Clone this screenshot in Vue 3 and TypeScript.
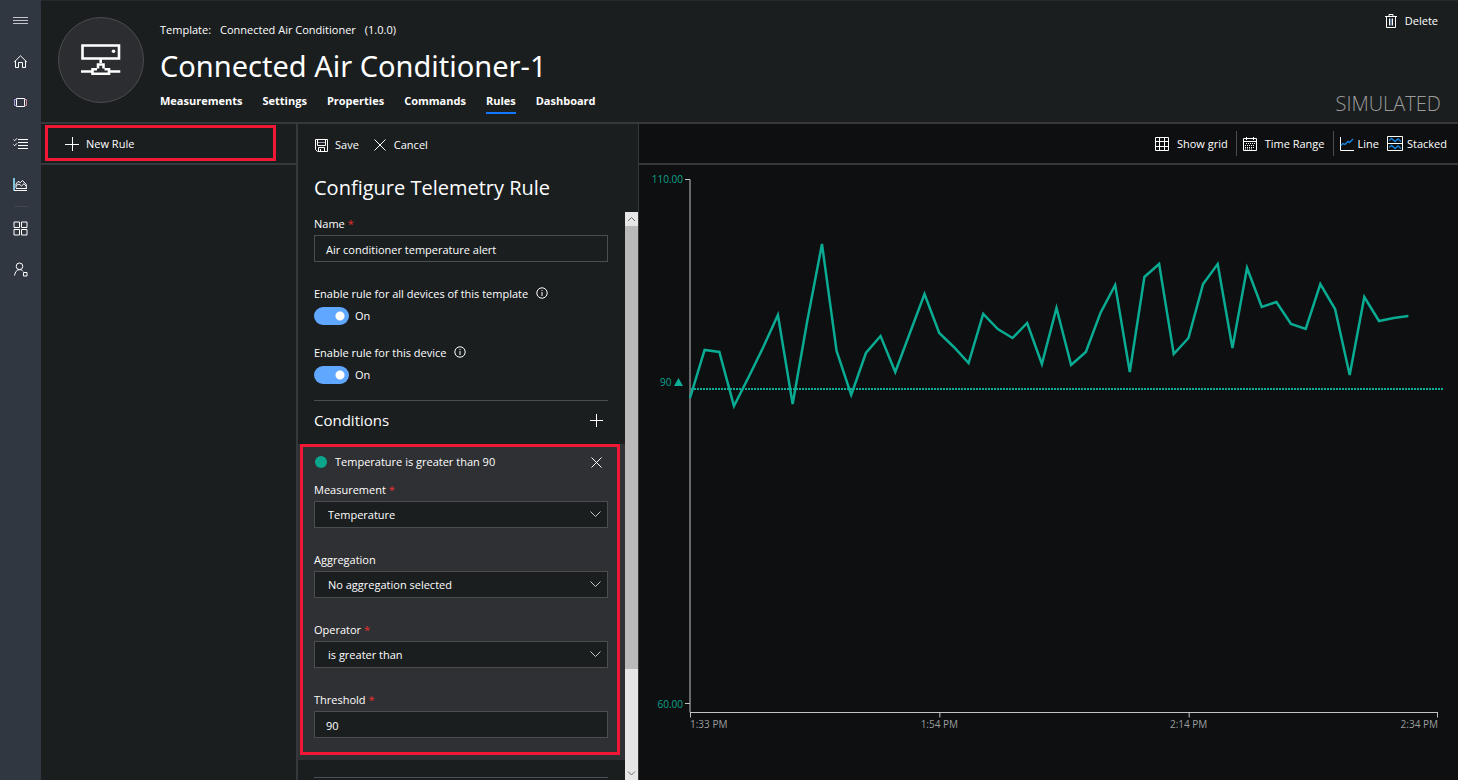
<script setup lang="ts">
import { computed, ref } from 'vue'

interface Reading { x: number; y: number }

const tabs = ['Measurements', 'Settings', 'Properties', 'Commands', 'Rules', 'Dashboard']
const activeTab = ref('Rules')

const ruleName = ref('Air conditioner temperature alert')
const allDevices = ref(true)
const thisDevice = ref(true)
const measurement = ref('Temperature')
const aggregation = ref('No aggregation selected')
const operator = ref('is greater than')
const threshold = ref('90')

const timeLabels = ['1:33 PM', '1:54 PM', '2:14 PM', '2:34 PM']

/* Vertical plot positions of the readings, one per time step. */
const levels: number[] = [
  219, 171, 173, 227, 198, 168, 136, 225, 142, 65, 172, 216, 174, 157, 193, 154, 115, 154, 168, 184,
  135, 150, 159, 144, 185, 129, 186, 173, 134, 106, 193, 98, 85, 175, 159, 105, 85, 169, 89, 128,
  123, 145, 150, 105, 130, 196, 118, 142, 139, 137,
]
const step = 14.64
const readings = computed<Reading[]>(() => levels.map((y, i) => ({ x: Math.round(i * step * 10) / 10, y })))
const linePoints = computed(() => readings.value.map((r) => `${r.x},${r.y}`).join(' '))
const conditionText = computed(() => `${measurement.value} ${operator.value} ${threshold.value}`)
</script>

<template>
  <div class="app">
    <nav class="rail" aria-label="Main">
      <button class="rail-item" type="button" aria-label="Menu">
        <svg width="15" height="15" viewBox="0 0 15 15"><path class="soft" d="M0 4.5H15M0 7.5H15M0 10.5H15" /></svg>
      </button>
      <a class="rail-item" href="#home" aria-label="Home">
        <svg width="15" height="15" viewBox="0 0 15 15"><path d="M1.2 8 7.5 1.8 13.8 8M2.5 6.8V13.5H5.5V8.5H9.5V13.5H12.5V6.8" /></svg>
      </a>
      <a class="rail-item" href="#devices" aria-label="Devices">
        <svg width="15" height="15" viewBox="0 0 15 15"><path d="M3.5 3.5H11.5V11.5H3.5Z" /><path class="violet" d="M3.5 4.5H1.5V10.5H3.5" /><path class="rose" d="M11.5 4.5H13.5V10.5H11.5" /></svg>
      </a>
      <a class="rail-item" href="#tasks" aria-label="Jobs">
        <svg width="15" height="15" viewBox="0 0 15 15"><path d="M5 3.5H15M5 6.5H15M5 9.5H15M5 12.5H15M.5 3.5 1.7 4.7 4 2.3M.5 8.5 1.7 9.7 4 7.3" /></svg>
      </a>
      <a class="rail-item" href="#analytics" aria-label="Analytics">
        <svg width="15" height="15" viewBox="0 0 15 15"><path class="cyan" d="M1 1V13.5" /><path d="M1 13.5H14M3 11.5H13.5M3 11V7L5 4.5 7.5 5.5 9.5 3.5 13.3 7.5V12M3.3 8.5 6 7 8.5 9 11 6.7 13 9" /></svg>
      </a>
      <hr class="rail-line" />
      <a class="rail-item" href="#dashboards" aria-label="Dashboards">
        <svg width="15" height="15" viewBox="0 0 15 15"><path d="M1 1H6.5V6.5H1ZM8.5 1H14V6.5H8.5ZM1 8.5H6.5V14H1ZM8.5 8.5H14V14H8.5Z" /></svg>
      </a>
      <a class="rail-item" href="#admin" aria-label="Administration">
        <svg width="15" height="15" viewBox="0 0 15 15"><circle cx="6.5" cy="4.3" r="3.3" /><path d="M1.5 13.5C2 10 4 7.6 6.5 7.6 8 7.6 9.2 8.3 10 9.3M10.5 10.5H14V14H10.5Z" /></svg>
      </a>
    </nav>

    <div class="main">
      <header class="header">
        <div class="avatar">
          <svg width="40" height="32" viewBox="0 0 40 32" fill="none" stroke="#fff" stroke-width="2.6">
            <path d="M1.5 1.5H38V14.5H1.5ZM19.7 15V19M17 24.5V20.5H22.5V24.5M11.5 29.8V25.3H16M23.5 25.3H28V29.8H10.2M0 27.5H11M28 27.5H39.3" />
            <circle cx="32.5" cy="7.3" r="1.8" fill="#fff" stroke="none" />
          </svg>
        </div>
        <div class="device">
          <p class="template"><span>Template:</span><span>Connected Air Conditioner</span><span>(1.0.0)</span></p>
          <h1>Connected Air Conditioner-1</h1>
          <nav class="tabs" aria-label="Device">
            <a v-for="tab in tabs" :key="tab" :href="'#' + tab.toLowerCase()" :class="{ active: tab === activeTab }" @click="activeTab = tab">{{ tab }}</a>
          </nav>
        </div>
        <div class="header-side">
          <button class="plain delete" type="button">
            <svg width="12" height="15" viewBox="0 0 12 15" fill="none" stroke="#fff"><path d="M0 2.5H12M4 2V.5H8V2M1.5 2.5V13.5H10.5V2.5M4.5 4.5V11.5M7.5 4.5V11.5" /><path stroke="#8ab8e8" d="M6 4.5V11.5" /></svg>
            Delete
          </button>
          <span class="simulated">SIMULATED</span>
        </div>
      </header>

      <div class="body">
        <aside class="rules">
          <div class="rules-bar">
            <button class="plain new-rule" type="button">
              <svg width="14" height="14" viewBox="0 0 14 14" fill="none" stroke="#fff"><path d="M7.5 0V14M0 7.5H14" /></svg>
              New Rule
            </button>
          </div>
        </aside>

        <section class="config">
          <div class="config-bar">
            <button class="plain save" type="button">
              <svg width="13" height="13" viewBox="0 0 13 13" fill="none" stroke="#fff"><path d="M.5 .5H12.5V12.5H2.5L.5 10.5ZM2.5 .5V6.5H10.5V.5M3.5 12V8.5H9.5V12M5.5 10V12" /><path stroke="#9c9fb4" d="M3 3.5H10" /></svg>
              Save
            </button>
            <button class="plain cancel" type="button">
              <svg width="12" height="12" viewBox="0 0 12 12" fill="none" stroke="#fff"><path d="M.5 .5 11.5 11.5M11.5 .5 .5 11.5" /></svg>
              Cancel
            </button>
          </div>
          <h2>Configure Telemetry Rule</h2>

          <div class="scroller">
            <form class="form" @submit.prevent>
              <div class="field">
                <label for="name">Name <span class="star">*</span></label>
                <input id="name" v-model="ruleName" class="box" type="text" />
              </div>

              <div class="toggle-field">
                <span class="caption" id="all-label">Enable rule for all devices of this template
                  <svg class="info" width="12" height="12" viewBox="0 0 12 12" fill="none" stroke="#fff"><circle cx="6" cy="6" r="5.2" /><path d="M6 5V9M6 3V4" /></svg>
                </span>
                <label class="toggle"><input v-model="allDevices" type="checkbox" role="switch" aria-labelledby="all-label" /><span>{{ allDevices ? 'On' : 'Off' }}</span></label>
              </div>
              <div class="toggle-field second">
                <span class="caption" id="this-label">Enable rule for this device
                  <svg class="info" width="12" height="12" viewBox="0 0 12 12" fill="none" stroke="#fff"><circle cx="6" cy="6" r="5.2" /><path d="M6 5V9M6 3V4" /></svg>
                </span>
                <label class="toggle"><input v-model="thisDevice" type="checkbox" role="switch" aria-labelledby="this-label" /><span>{{ thisDevice ? 'On' : 'Off' }}</span></label>
              </div>

              <div class="conditions-head">
                <h3>Conditions</h3>
                <button class="plain" type="button" aria-label="Add condition">
                  <svg width="13" height="13" viewBox="0 0 13 13" fill="none" stroke="#fff"><path d="M6.5 0V13M0 6.5H13" /></svg>
                </button>
              </div>

              <div class="condition">
                <div class="condition-head">
                  <span class="dot"></span>
                  <span class="condition-text">{{ conditionText }}</span>
                  <button class="plain" type="button" aria-label="Remove condition">
                    <svg width="11" height="11" viewBox="0 0 11 11" fill="none" stroke="#fff"><path d="M.5 .5 10.5 10.5M10.5 .5 .5 10.5" /></svg>
                  </button>
                </div>
                <div class="field">
                  <label for="measurement">Measurement <span class="star">*</span></label>
                  <div class="select">
                    <select id="measurement" v-model="measurement" class="box"><option>Temperature</option></select>
                    <svg width="11" height="6" viewBox="0 0 11 6"><path d="M.5 .5 5.5 5.5 10.5 .5" /></svg>
                  </div>
                </div>
                <div class="field">
                  <label for="aggregation">Aggregation</label>
                  <div class="select">
                    <select id="aggregation" v-model="aggregation" class="box"><option>No aggregation selected</option></select>
                    <svg width="11" height="6" viewBox="0 0 11 6"><path d="M.5 .5 5.5 5.5 10.5 .5" /></svg>
                  </div>
                </div>
                <div class="field">
                  <label for="operator">Operator <span class="star">*</span></label>
                  <div class="select">
                    <select id="operator" v-model="operator" class="box"><option>is greater than</option></select>
                    <svg width="11" height="6" viewBox="0 0 11 6"><path d="M.5 .5 5.5 5.5 10.5 .5" /></svg>
                  </div>
                </div>
                <div class="field">
                  <label for="threshold">Threshold <span class="star">*</span></label>
                  <input id="threshold" v-model="threshold" class="box" type="text" />
                </div>
              </div>
              <hr class="form-line" />
            </form>

            <div class="scrollbar" aria-hidden="true">
              <svg class="arrow" width="13" height="14" viewBox="0 0 13 14"><path d="M3 9 6.5 5.5 10 9" /></svg>
              <div class="track"><div class="thumb"></div></div>
              <svg class="arrow" width="13" height="14" viewBox="0 0 13 14"><path d="M3 5.5 6.5 9 10 5.5" /></svg>
            </div>
          </div>
        </section>

        <section class="chart">
          <div class="chart-bar">
            <button class="plain grid-button" type="button">
              <svg width="14" height="14" viewBox="0 0 14 14" fill="none" stroke="#fff"><path d="M.5 .5H13.5V13.5H.5ZM.5 4.5H13.5M.5 9.5H13.5M4.5 .5V13.5M9.5 .5V13.5" /></svg>
              Show grid
            </button>
            <span class="divider"></span>
            <button class="plain range-button" type="button">
              <svg width="14" height="14" viewBox="0 0 14 14" fill="none" stroke="#fff"><path d="M.5 1.5H13.5V13.5H.5ZM.5 4.5H13.5M3.5 0V3M10.5 0V3" /><path stroke-dasharray="1 1" d="M3 6.5H12M2 8.5H12M2 10.5H12M2 12H10" /></svg>
              Time Range
            </button>
            <span class="divider"></span>
            <button class="plain line-button" type="button">
              <svg width="14" height="14" viewBox="0 0 14 14" fill="none"><path stroke="#fff" d="M.5 0V13.5H14" /><path stroke="#1683dc" stroke-width="1.4" d="M1 8.5 3 6.5 5 7.5 8 4.5 9.5 5.5 13 2" /></svg>
              Line
            </button>
            <button class="plain stack-button" type="button">
              <svg width="16" height="15" viewBox="0 0 16 15" fill="none"><path stroke="#fff" d="M.5 .5H15.5V14.5H.5ZM.5 7.5H15.5" /><path stroke="#1683dc" stroke-width="1.4" d="M2 4.5 4.5 2.5 8 5.5 11 3 14 5.5M2 11.5 4.5 9.5 8 12.5 11 10 14 12.5" /></svg>
              Stacked
            </button>
          </div>

          <div class="plot-area">
            <div class="y-axis">
              <span>110.00</span>
              <i class="upper"></i>
              <span class="limit">90 <svg width="9" height="8" viewBox="0 0 9 8"><path d="M4.5 0 9 8H0Z" fill="#0fae96" /></svg></span>
              <i class="lower"></i>
              <span>60.00</span>
            </div>
            <svg class="plot" viewBox="0 0 747 534" preserveAspectRatio="none" fill="none">
              <path class="axis" d="M-5 .5H0V533.5H747M-5 524.5H0M.5 533V538.5M249.5 533V538.5M498.5 533V538.5M746.5 533V538.5" />
              <path class="limit-line" d="M1 210H752" />
              <polyline class="series" :points="linePoints" />
            </svg>
            <div class="x-axis">
              <span v-for="label in timeLabels" :key="label">{{ label }}</span>
            </div>
          </div>
        </section>
      </div>
    </div>
  </div>
</template>

<style>
body {
  margin: 0;
  background: #0d0f10;
}
</style>

<style scoped>
* {
  box-sizing: border-box;
}

.app {
  display: flex;
  height: 100vh;
  overflow: hidden;
  background: #1a1e1f;
  color: #fff;
  font-family: "Open Sans", "Noto Sans", sans-serif;
  font-size: 11px;
  line-height: 20px;
}

h1, h2, h3, p {
  margin: 0;
  font-weight: 400;
}

a {
  color: inherit;
  text-decoration: none;
}

.plain {
  display: flex;
  align-items: center;
  padding: 0;
  border: 0;
  background: none;
  color: inherit;
  font: inherit;
  white-space: nowrap;
}

.rail {
  flex: none;
  width: 41px;
  background: #313740;
}

.rail-item {
  display: flex;
  align-items: center;
  justify-content: center;
  width: 100%;
  height: 41px;
  padding: 0;
  border: 0;
  background: none;
}

.rail svg {
  fill: none;
  stroke: #fff;
}

.rail .soft {
  stroke: #c3c6ca;
}

.rail .violet {
  stroke: #a99be0;
}

.rail .rose {
  stroke: #d08f9c;
}

.rail .cyan {
  stroke: #7cc4dc;
  stroke-width: 2;
}

.rail-line {
  width: 14px;
  height: 1px;
  margin: 1px auto;
  border: 0;
  background: #43464b;
}

.main {
  flex: 1;
  min-width: 0;
  display: flex;
  flex-direction: column;
  border-top: 1px solid #26292b;
}

.header {
  display: flex;
  padding: 16px 17px 8px;
  border-bottom: 2px solid #36393b;
}

.avatar {
  display: grid;
  place-items: center;
  flex: none;
  width: 86px;
  height: 86px;
  margin-right: 16px;
  border: 1px solid #4b4d50;
  border-radius: 50%;
  background: #2b2d30;
}

.device {
  flex: 1;
}

.template {
  display: flex;
  gap: 9px;
  margin-top: 3px;
}

h1 {
  margin-top: 2px;
  font-family: "Noto Sans", "Open Sans", sans-serif;
  font-size: 29px;
  line-height: 48px;
}

.tabs {
  display: flex;
  gap: 20px;
  font-weight: 700;
}

.tabs a {
  height: 24px;
  line-height: 22px;
  border-bottom: 2px solid transparent;
}

.tabs .active {
  border-color: #1279ff;
}

.header-side {
  display: flex;
  flex-direction: column;
  align-items: flex-end;
  justify-content: space-between;
  margin: -6px 0 -3px;
}

.delete {
  gap: 8px;
  margin-right: 3px;
}

.simulated {
  color: #9b9b9b;
  font-weight: 300;
  font-size: 20px;
  line-height: 26px;
}

.body {
  flex: 1;
  min-height: 0;
  display: flex;
}

.rules {
  flex: none;
  width: 255px;
}

.rules-bar {
  height: 41px;
  padding: 1px 0 0 4px;
  border-bottom: 2px solid #36393b;
}

.new-rule {
  gap: 7px;
  width: 231px;
  height: 36px;
  padding: 2px 0 0 17px;
  border: 3px solid #f01834;
}

.config {
  flex: none;
  display: flex;
  flex-direction: column;
  width: 343px;
  border: solid #36393b;
  border-width: 0 1px 0 2px;
}

.config-bar {
  display: flex;
  gap: 15px;
  padding: 11px 17px 0;
}

.save {
  gap: 7px;
}

.cancel {
  gap: 8px;
}

h2 {
  padding: 18px 16px 9px;
  font-size: 20px;
  line-height: 30px;
}

.scroller {
  flex: 1;
  min-height: 0;
  display: flex;
}

.form {
  flex: 1;
  min-width: 0;
  overflow: hidden;
  padding: 2px 17px 0 16px;
}

.field label {
  display: block;
  margin-bottom: 1px;
}

.star {
  color: #e8302e;
}

.box {
  display: block;
  width: 100%;
  height: 27px;
  padding: 1px 11px 0;
  border: 1px solid #4b4e50;
  border-radius: 0;
  background: #1a1e1f;
  color: #fff;
  font: inherit;
  outline: 0;
  appearance: none;
}

.select {
  position: relative;
}

.select .box {
  padding: 1px 13px 0;
}

.select svg {
  position: absolute;
  top: 10px;
  right: 7px;
  fill: none;
  stroke: #c4c6c8;
  pointer-events: none;
}

.toggle-field {
  margin-top: 22px;
}

.toggle-field.second {
  margin-top: 18px;
}

.caption {
  display: flex;
  align-items: center;
  gap: 8px;
  height: 20px;
}

.info {
  margin-bottom: 2px;
}

.toggle {
  display: flex;
  align-items: center;
  gap: 6px;
  height: 18px;
  margin-top: 3px;
}

.toggle input {
  width: 35px;
  height: 18px;
  margin: 0;
  border-radius: 9px;
  background: #515558 radial-gradient(circle at 9px 50%, #fff 4px, transparent 5px);
  appearance: none;
}

.toggle input:checked {
  background: #60a8ff radial-gradient(circle at 26px 50%, #fff 4px, transparent 5px);
}

.conditions-head {
  display: flex;
  align-items: center;
  justify-content: space-between;
  height: 44px;
  margin-top: 16px;
  padding: 0 5px 4px 0;
  border-top: 1px solid #4b4e50;
}

h3 {
  font-size: 15px;
  line-height: 20px;
  padding-bottom: 2px;
}

.condition {
  position: relative;
  display: flex;
  flex-direction: column;
  gap: 22px;
  margin: 0 -17px 0 -16px;
  padding: 8px 17px 22px 16px;
  background: #2f3033;
}

.condition::after {
  content: "";
  position: absolute;
  inset: 0 5px 5px 2px;
  border: 3px solid #f01834;
  pointer-events: none;
}

.condition-head {
  display: flex;
  align-items: center;
  height: 20px;
  margin-bottom: -14px;
  padding: 0 6px 0 1px;
}

.dot {
  width: 12px;
  height: 12px;
  margin-right: 8px;
  border-radius: 50%;
  background: #0aa68c;
}

.condition-text {
  flex: 1;
}

.form-line {
  height: 1px;
  margin: 17px 0 0;
  border: 0;
  background: #4b4e50;
}

.scrollbar {
  flex: none;
  display: flex;
  flex-direction: column;
  width: 13px;
  background: #e6e6e6;
}

.arrow {
  flex: none;
  fill: none;
  stroke: #6b6b6b;
}

.track {
  flex: 1;
}

.thumb {
  height: 82%;
  background: #b9b9b9;
}

.chart {
  flex: 1;
  min-width: 0;
  display: flex;
  flex-direction: column;
  background: #0d0f10;
}

.chart-bar {
  display: flex;
  align-items: center;
  justify-content: flex-end;
  height: 41px;
  padding-right: 11px;
  border-bottom: 2px solid #36393b;
}

.divider {
  width: 1px;
  height: 25px;
  margin: 0 6px 0 8px;
  background: #4b4e50;
}

.grid-button,
.range-button {
  gap: 8px;
}

.line-button,
.stack-button {
  gap: 4px;
}

.stack-button {
  margin-left: 8px;
}

.plot-area {
  flex: 1;
  min-height: 0;
  display: grid;
  grid-template: 1fr 67px / 51px 1fr;
  padding: 14px 20px 0 0;
}

.y-axis {
  display: flex;
  flex-direction: column;
  margin: -7px 7px 2px 0;
  color: #0fa48d;
  font-size: 10px;
  line-height: 14px;
  text-align: right;
}

.upper {
  flex: 189;
}

.lower {
  flex: 307;
}

.plot {
  width: 100%;
  height: 100%;
  min-height: 0;
  overflow: visible;
}

.plot path,
.plot polyline {
  vector-effect: non-scaling-stroke;
}

.axis {
  stroke: #c2c3c4;
}

.limit-line {
  stroke: #0fae96;
  stroke-width: 2px;
  stroke-dasharray: 2 1;
}

.series {
  stroke: #0aab93;
  stroke-width: 2.5px;
}

.x-axis {
  grid-column: 2;
  display: flex;
  padding-top: 3px;
  color: #9b9d9f;
  font-size: 10px;
  line-height: 16px;
}

.x-axis span {
  flex: 2 0 0;
  text-align: center;
}

.x-axis span:first-child {
  flex-grow: 1;
  text-align: left;
}

.x-axis span:last-child {
  flex-grow: 1;
  text-align: right;
}
</style>
